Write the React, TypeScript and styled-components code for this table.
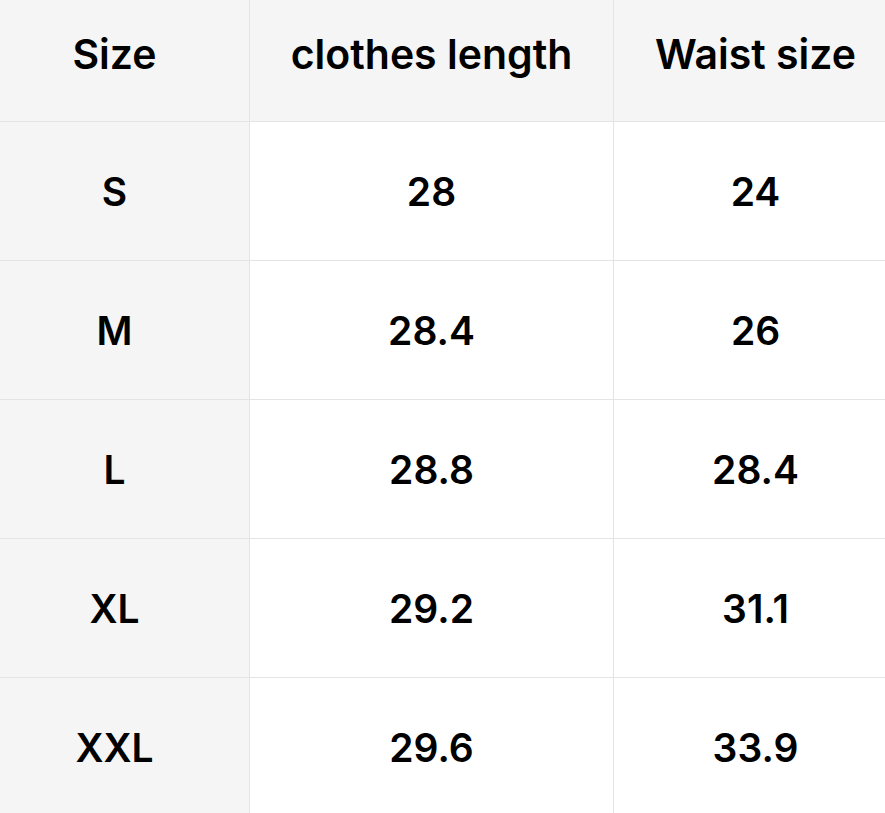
import React from "react";
import styled, { createGlobalStyle } from "styled-components";

const Global = createGlobalStyle`
  html, body { margin: 0; padding: 0; background: #ffffff; }
  body { font-family: Inter, "Noto Sans", sans-serif; overflow: hidden; }
`;

const Table = styled.div`
  display: grid;
  grid-template-columns: 250px 364px 271px;
  grid-template-rows: 122px repeat(5, 139px);
  width: 885px;
  color: #000;
`;

const Cell = styled.div<{ $head?: boolean; $col: number; $last?: boolean }>`
  display: flex;
  align-items: center;
  justify-content: center;
  box-sizing: border-box;
  background: ${(p) => (p.$head || p.$col === 0 ? "#f5f5f5" : "#ffffff")};
  border-right: ${(p) => (p.$col < 2 ? "1px solid #e4e4e4" : "none")};
  border-bottom: ${(p) => (p.$last ? "none" : "1px solid #e4e4e4")};
  padding-right: ${(p) => (p.$col === 0 ? "20px" : "0")};
  padding-left: ${(p) => (p.$col === 2 ? "12px" : "0")};
  padding-bottom: ${(p) => (p.$head ? "12px" : "0")};
  font-size: ${(p) => (p.$head ? "41px" : "39px")};
  font-weight: 600;
  letter-spacing: 0;
  line-height: 1;
`;

const header = ["Size", "clothes length", "Waist size"];
const rows = [
  ["S", "28", "24"],
  ["M", "28.4", "26"],
  ["L", "28.8", "28.4"],
  ["XL", "29.2", "31.1"],
  ["XXL", "29.6", "33.9"],
];

export default function App() {
  return (
    <>
      <Global />
      <Table>
        {header.map((h, i) => (
          <Cell key={h} $head $col={i}>
            {h}
          </Cell>
        ))}
        {rows.map((r, ri) =>
          r.map((v, ci) => (
            <Cell key={`${ri}-${ci}`} $col={ci} $last={ri === rows.length - 1}>
              {v}
            </Cell>
          ))
        )}
      </Table>
    </>
  );
}
